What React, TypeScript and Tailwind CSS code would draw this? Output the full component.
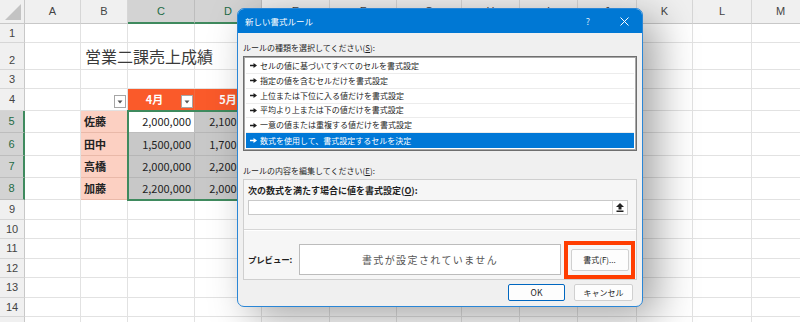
import React from "react";

const COLS = ["A", "B", "C", "D", "E", "F", "G", "H", "I", "J", "K", "L", "M"];
const ROW_COUNT = 15;
const MONTHS: Record<number, string> = { 3: "4月", 4: "5月", 5: "6月", 6: "7月", 7: "8月", 8: "9月" };
const NAMES: Record<number, string> = { 5: "佐藤", 6: "田中", 7: "高橋", 8: "加藤" };
const VALUES: Record<number, string[]> = {
  5: ["2,000,000", "2,100,000", "2,300,000", "2,000,000", "2,100,000", "2,400,000"],
  6: ["1,500,000", "1,700,000", "1,800,000", "1,600,000", "1,700,000", "1,900,000"],
  7: ["2,000,000", "2,200,000", "2,100,000", "2,300,000", "2,200,000", "2,000,000"],
  8: ["2,200,000", "2,000,000", "2,400,000", "2,100,000", "2,300,000", "2,200,000"],
};

const jp = "font-['Noto_Sans_CJK_JP','Noto_Sans_CJK_SC',sans-serif]";
const ui = "font-['Liberation_Sans','Noto_Sans_CJK_JP',sans-serif]";

function FilterBtn() {
  return (
    <div className="w-[12px] h-[13px] bg-white border border-[#a6a6a6] flex items-center justify-center">
      <svg width="6" height="4" viewBox="0 0 6 4">
        <polygon points="0.5,0.5 5.5,0.5 3,3.5" fill="#555" />
      </svg>
    </div>
  );
}

function Cell({ r, c }: { r: number; c: number }) {
  if (r === 0 && c === 0) {
    return (
      <div className="bg-[#f0f0f0] border-r border-b border-[#c8c8c8] flex items-end justify-end p-[2px]">
        <svg width="18" height="17" viewBox="0 0 18 17">
          <polygon points="17,0 17,16 1,16" fill="#c3c3c3" />
        </svg>
      </div>
    );
  }
  if (r === 0) {
    const sel = c === 3 || c === 4;
    return (
      <div
        className={
          sel
            ? `bg-[#d3d3d3] border-r border-r-[#bdbdbd] border-b-2 border-b-[#3f8a5e] flex items-center justify-center text-[11px] text-[#1e6b45] ${ui}`
            : `bg-[#f0f0f0] border-r border-r-[#d6d6d6] border-b border-b-[#c8c8c8] flex items-center justify-center text-[11px] text-[#444] ${ui}`
        }
      >
        {COLS[c - 1]}
      </div>
    );
  }
  if (c === 0) {
    const sel = r >= 5 && r <= 8;
    const align = r === 2 ? "items-end pb-[1px]" : "items-center";
    return (
      <div
        className={
          sel
            ? `bg-[#d3d3d3] border-b border-b-[#bdbdbd] border-r-2 border-r-[#3f8a5e] flex justify-center ${align} text-[11px] text-[#1e6b45] ${ui}`
            : `bg-[#f0f0f0] border-b border-b-[#d6d6d6] border-r border-r-[#c8c8c8] flex justify-center ${align} text-[11px] text-[#444] ${ui}`
        }
      >
        {r < 15 ? r : null}
      </div>
    );
  }
  if (r === 2 && c === 2) {
    return (
      <div className={`relative z-10 border-r border-b border-[#e2e2e2] flex items-end pb-[2px] pl-[4px] whitespace-nowrap text-[16px] leading-[22px] text-[#3a3a3a] ${jp}`}>
        営業二課売上成績
      </div>
    );
  }
  if (r === 4 && c === 2) {
    return (
      <div className="bg-white border-r border-b border-[#e2e2e2] flex items-end justify-end pr-[1px] pb-[2px]">
        <FilterBtn />
      </div>
    );
  }
  if (r === 4 && MONTHS[c]) {
    return (
      <div className={`bg-[#fa5a2a] border-r border-b border-[#f06a40] flex items-center text-white font-bold text-[11px] ${jp}`}>
        <div className="flex-1 text-center">{MONTHS[c]}</div>
        {c === 3 ? (
          <div className="self-end pb-[2px] pr-[1px]">
            <FilterBtn />
          </div>
        ) : null}
      </div>
    );
  }
  if (r >= 5 && r <= 8 && c === 2) {
    return (
      <div className={`bg-[#fcd0c2] border-r border-b border-[#e9b9a9] flex items-center pl-[3px] font-bold text-[11px] text-[#222] ${jp}`}>
        {NAMES[r]}
      </div>
    );
  }
  if (r >= 5 && r <= 8 && c >= 3 && c <= 8) {
    const active = r === 5 && c === 3;
    return (
      <div
        className={
          active
            ? `bg-white border-r border-b border-[#bdbdbd] flex items-center justify-end pr-[3px] text-[11px] text-[#222] ${jp}`
            : `bg-[#c8c8c8] border-r border-b border-[#b6b6b6] flex items-center justify-end pr-[3px] text-[11px] text-[#222] overflow-hidden whitespace-nowrap ${jp}`
        }
      >
        {VALUES[r][c - 3]}
      </div>
    );
  }
  return <div className="bg-white border-r border-b border-[#e2e2e2]" />;
}

function Pointer({ color }: { color: string }) {
  return (
    <svg width="7" height="5" viewBox="0 0 7 5" className="shrink-0">
      <polygon points="0,1.8 3.5,1.8 3.5,0 7,2.5 3.5,5 3.5,3.2 0,3.2" fill={color} />
    </svg>
  );
}

function ListItem({ text, selected }: { text: string; selected?: boolean }) {
  return (
    <div
      className={
        selected
          ? "h-[15.5px] flex items-center pl-[4px] bg-[#0078d7] text-white"
          : "h-[15.5px] flex items-center pl-[4px] border-b border-[#ececec] text-[#1e1e1e]"
      }
    >
      <Pointer color={selected ? "#ffffff" : "#1e1e1e"} />
      <span className="ml-[3px] text-[8px] leading-none">{text}</span>
    </div>
  );
}

function Dialog() {
  return (
    <div
      className={`absolute left-[237px] top-[8px] w-[406px] h-[299px] rounded-[7px] border border-[#2a86d6] bg-[#f0f0f0] shadow-[14px_10px_40px_rgba(0,0,0,0.36)] overflow-hidden flex flex-col ${jp}`}
    >
      <div className="h-[24px] shrink-0 bg-[#0078d4] flex items-center pl-[7px] pr-[11px] text-white">
        <span className="text-[8.5px] leading-none">新しい書式ルール</span>
        <span className="ml-auto w-[14px] text-center text-[9px] leading-none text-[#dbe9f7]">?</span>
        <span className="w-[22px]" />
        <span className="w-[14px] flex justify-center">
          <svg width="9" height="9" viewBox="0 0 9 9">
            <path d="M0.5 0.5 L8.5 8.5 M8.5 0.5 L0.5 8.5" stroke="white" strokeWidth="1" />
          </svg>
        </span>
      </div>
      <div className="flex flex-col px-[5px]">
        <div className="mt-[8px] h-[14px] flex items-center text-[8px] text-[#1e1e1e]">
          ルールの種類を選択してください(<span className="underline">S</span>):
        </div>
        <div className="mt-[1px] h-[95px] bg-white border border-[#6f6f6f] shadow-[inset_0_0_0_1px_#a8a8a8] p-[2px] flex flex-col">
          <ListItem text="セルの値に基づいてすべてのセルを書式設定" />
          <ListItem text="指定の値を含むセルだけを書式設定" />
          <ListItem text="上位または下位に入る値だけを書式設定" />
          <ListItem text="平均より上または下の値だけを書式設定" />
          <ListItem text="一意の値または重複する値だけを書式設定" />
          <ListItem text="数式を使用して、書式設定するセルを決定" selected />
        </div>
        <div className="mt-[13px] h-[14px] flex items-center text-[8px] text-[#1e1e1e]">
          ルールの内容を編集してください(<span className="underline">E</span>):
        </div>
        <div className="mt-[1px] h-[101px] border border-[#cfcfcf] bg-[#f6f6f6] flex flex-col">
          <div className="mt-[4px] h-[14px] pl-[4px] flex items-center text-[9px] font-bold text-[#1e1e1e]">
            次の数式を満たす場合に値を書式設定(<span className="underline">O</span>):
          </div>
          <div className="mt-[2px] ml-[4px] w-[380px] h-[15px] bg-white border border-[#c9c9c9] flex justify-end">
            <div className="w-[15px] h-full border-l border-[#dadada] flex items-center justify-center">
              <svg width="8" height="9" viewBox="0 0 8 9">
                <polygon points="4,0 8,4 5.5,4 5.5,6.5 2.5,6.5 2.5,4 0,4" fill="#222" />
                <rect x="0.5" y="7.5" width="7" height="1.5" fill="#222" />
              </svg>
            </div>
          </div>
          <div className="mt-[14px] h-[2px] border-t border-[#d6d6d6] border-b border-b-white" />
          <div className="mt-[9px] h-[39px] flex items-center pl-[4px]">
            <div className="w-[51px] text-[8.5px] font-bold text-[#1e1e1e] tracking-[-0.2px]">プレビュー:</div>
            <div className="w-[262px] h-[31px] bg-white border border-[#bcbcbc] flex items-center justify-center text-[10px] tracking-[1.4px] text-[#555]">
              書式が設定されていません
            </div>
            <div className="ml-[3px] w-[71px] h-[38px] border-[4px] border-[#ff3d00] flex items-center justify-center">
              <div className="w-[58px] h-[22px] bg-[#fdfdfd] border border-[#d0d0d0] rounded-[2px] flex items-center justify-center text-[8px] text-[#1e1e1e]">
                書式(F)...
              </div>
            </div>
          </div>
        </div>
        <div className="mt-[4px] h-[17px] flex justify-end gap-[9px] pr-[4px]">
          <div className="w-[57px] h-full bg-[#fdfdfd] border border-[#0067c0] rounded-[2px] flex items-center justify-center text-[8.5px] text-[#1e1e1e]">
            OK
          </div>
          <div className="w-[59px] h-full bg-[#fdfdfd] border border-[#d0d0d0] rounded-[2px] flex items-center justify-center text-[8px] text-[#1e1e1e]">
            キャンセル
          </div>
        </div>
      </div>
    </div>
  );
}

export default function App() {
  const cells: React.ReactNode[] = [];
  for (let r = 0; r <= ROW_COUNT; r++) {
    for (let c = 0; c <= COLS.length; c++) {
      cells.push(<Cell key={`${r}-${c}`} r={r} c={c} />);
    }
  }
  return (
    <div className="relative w-[800px] h-[322px] overflow-hidden bg-white">
      <div className="grid grid-cols-[25px_56px_47px_67px_67px_68px_67px_65px_58px_58px_59px_56px_59px_58px] grid-rows-[24px_19px_27px_19px_22px_22px_23px_22px_22px_20px_19px_20px_19px_20px_19px_20px]">
        {cells}
      </div>
      <div className="absolute left-[127px] top-[110px] w-[405px] h-[91px] border-2 border-[#3f8a5e] pointer-events-none" />
      <Dialog />
    </div>
  );
}
